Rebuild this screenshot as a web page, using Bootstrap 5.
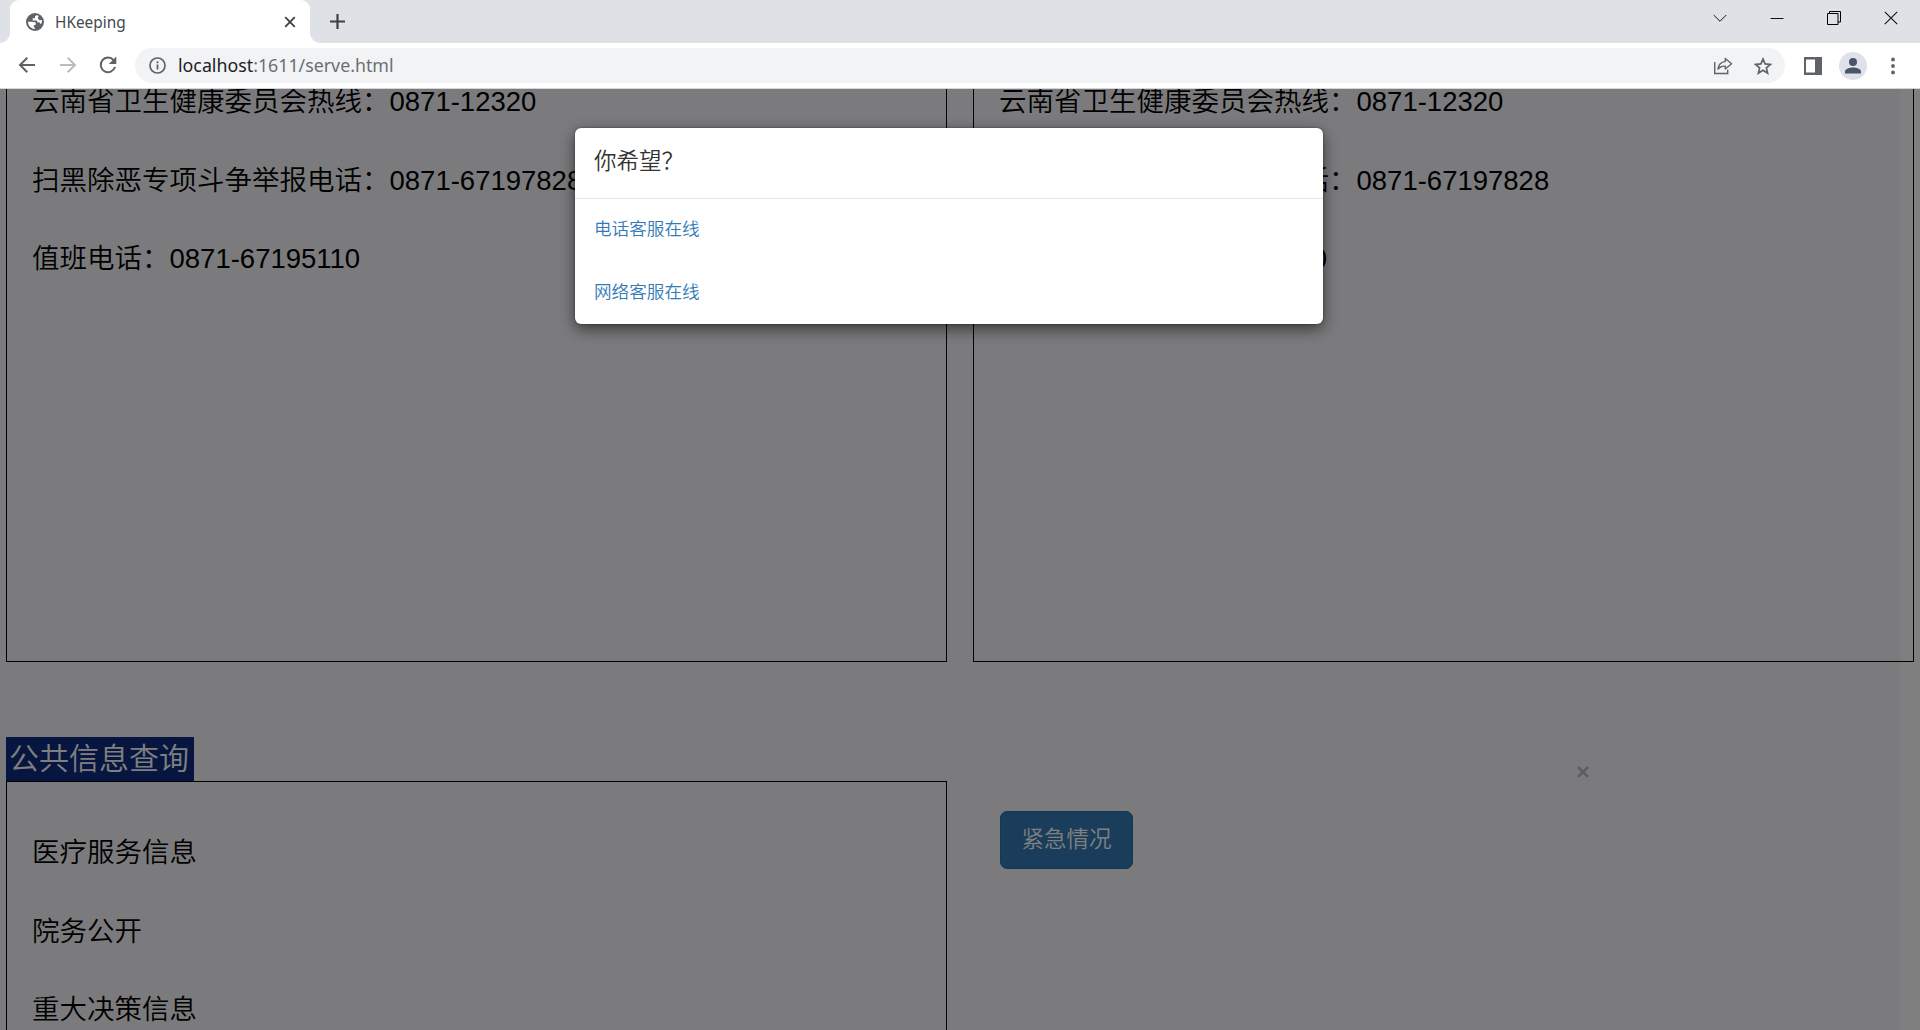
<!DOCTYPE html>
<html lang="zh-CN">
<head>
<meta charset="utf-8">
<title>HKeeping</title>
<link href="https://cdn.jsdelivr.net/npm/bootstrap@5.3.0/dist/css/bootstrap.min.css" rel="stylesheet">
<style>
body{width:1920px;height:1030px;overflow:hidden;background:#fff;font-family:"Liberation Sans","Noto Sans CJK SC",sans-serif;}
svg{display:block;flex:none}
.tabstrip{height:43px;background:#dee1e6;padding-left:10px}
.tab{width:300px;height:43px;background:#fff;border-radius:9px 9px 0 0;padding:0 13px 0 16px;color:#45494d;font:16.4px "Noto Sans",sans-serif;position:relative}
.tab::before,.tab::after{content:"";position:absolute;bottom:0;width:10px;height:10px}
.tab::before{left:-10px;background:radial-gradient(circle at 0 0,transparent 9.5px,#fff 10px)}
.tab::after{right:-10px;background:radial-gradient(circle at 100% 0,transparent 9.5px,#fff 10px)}
.tabname{font-size:15.4px;margin:2px 0 0 11px}
.winbtns{gap:43px;padding:0 22px 7px 0}
.toolbar-row{height:46px;border-bottom:1px solid #d4d5d7;padding:0 25px 0 18px}
.omnibox{height:35px;background:#f1f3f4;border-radius:18px;margin-left:17px;padding:0 13px 0 14px}
.address{font:17.8px "Noto Sans",sans-serif;color:#6b6f73;margin:-1px 0 0 12px;white-space:nowrap}
.address b{font-weight:400;color:#202124}
.avatar{width:28px;height:28px;background:#dee1ea}
.pagearea{height:941px;background:#fff}
.pagebody{width:1900px;height:941px;background:#f7f7fa;padding-left:6px}
.panelrow{width:1908px;gap:26px}
.panel{width:941px;border:1px solid #000;padding-left:25px;color:#000;font-size:27.5px;font-weight:350}
.panel p{margin:0;height:78.6px;line-height:78.6px;white-space:nowrap}
.phones{height:573px;border-top:0}
.phones p:first-child{margin-top:-26px}
.topic{margin-top:75px;width:188px;height:44px;line-height:43px;background:#0e2a82;color:#fff;font-size:30px;padding-left:3px;font-weight:350;white-space:nowrap}
.topics{height:400px;padding-top:32px}
.urgent{--bs-btn-bg:#337ab7;--bs-btn-border-color:#2e6da4;--bs-btn-color:#fff;width:133px;height:58px;font-size:22.5px;border-radius:7px;margin:30px 0 0 27px;padding:0;font-weight:350}
.dismiss{margin:-16px 0 0 443px}
.shade{inset:0;background:#000;opacity:.5}
.dialogbox{left:575px;top:39px;width:748px;height:196px;background:#fff;border:0;border-radius:6px;box-shadow:0 5px 15px rgba(0,0,0,.55),0 0 2px rgba(0,0,0,.5)}
.dialogbox .modal-header{height:71px;padding:0 19px 2px;border-bottom:1px solid #e5e5e5}
.dialogbox .modal-title{font-size:22.5px;font-weight:350;color:#333;line-height:32px}
.dialogbox .modal-body{padding:0 19px;font-size:17.6px;font-weight:350}
.dialogbox a{display:block;height:63px;line-height:60px;color:#337ab7;text-decoration:none}
</style>
</head>
<body>
<header>
  <div class="tabstrip d-flex align-items-center">
    <div class="tab d-flex align-items-center">
      <svg width="18" height="18" viewBox="0 0 18 18"><circle cx="9" cy="9" r="9" fill="#5f6368"/><path d="M10.500 2.200L9 3.200V5.300H6.700V7.500H11.200V9.300H13.200L14.800 11.200C15.700 10 16.200 8.500 16 7L13.500 7.300L12 5.500V4L13 3C12.200 2.500 11.500 2.200 10.500 2.200ZM2 8.700H6.200L9.700 9.500V11.700L7.800 12.300V13.700L9.300 16C5.500 16 2 13 2 8.700Z" fill="#fff"/></svg>
      <span class="tabname">HKeeping</span>
      <svg class="ms-auto" width="14" height="14" viewBox="0 0 14 14" stroke="#3c4043" stroke-width="1.800"><path d="M2.200 2.200l9.600 9.600M11.800 2.200l-9.600 9.600"/></svg>
    </div>
    <svg style="margin-left:19px" width="17" height="17" viewBox="0 0 17 17" stroke="#3c4043" stroke-width="2.200"><path d="M1 8.500h15M8.500 1v15"/></svg>
    <div class="winbtns d-flex align-items-center ms-auto">
      <svg width="14" height="14" viewBox="0 0 14 14" fill="none" stroke="#111"><path d="M.7 4l6.300 6.300L13.300 4"/></svg>
      <svg width="14" height="14" viewBox="0 0 14 14" stroke="#111"><path d="M.5 7.500h13"/></svg>
      <svg width="14" height="14" viewBox="0 0 14 14" fill="none" stroke="#000"><path d="M.5 2.500h10.500v11H.5zM2.500 2.500v-2h11v10.500h-2.500"/></svg>
      <svg width="14" height="14" viewBox="0 0 14 14" stroke="#111" stroke-width="1.100"><path d="M.8.800l12.400 12.400M13.200.800L.8 13.200"/></svg>
    </div>
  </div>
  <div class="toolbar-row d-flex align-items-center">
    <svg style="margin-top:-1px" width="18" height="18" viewBox="0 0 18 18" fill="none" stroke="#5f6368" stroke-width="2"><path d="M17 9H3M9.300 1.700L2 9l7.300 7.300"/></svg>
    <svg style="margin:-1px 0 0 23px" width="18" height="18" viewBox="0 0 18 18" fill="none" stroke="#babcbe" stroke-width="2"><path d="M1 9h14M8.700 1.700L16 9l-7.300 7.300"/></svg>
    <svg style="margin:-1px 0 0 22px" width="19" height="18" viewBox="0 0 19 18"><path d="M14.500 4A7.300 7.300 0 1 0 16 11" fill="none" stroke="#5f6368" stroke-width="2"/><path d="M17.300.500V8H9.800z" fill="#5f6368"/></svg>
    <div class="omnibox d-flex align-items-center flex-grow-1">
      <svg width="17" height="17" viewBox="0 0 17 17"><circle cx="8.500" cy="8.500" r="7.500" fill="none" stroke="#5f6368" stroke-width="1.700"/><path d="M7.600 7.500h1.800v5H7.600zM7.600 4.300h1.800v1.900H7.600z" fill="#5f6368"/></svg>
      <span class="address"><b>localhost</b>:1611/serve.html</span>
      <svg class="ms-auto" width="20" height="18" viewBox="0 0 20 18" fill="none" stroke="#5f6368" stroke-width="1.400"><path d="M1.700 5v11.500h13v-3.800"/><path d="M12.300 1.500L18.600 6.800l-6.300 5.200V9.200C8.800 8.900 6.700 9.900 5 12.200C5.500 8 8 5 12.300 4.400z" stroke-linejoin="round"/></svg>
      <svg style="margin-left:21px" width="18" height="18" viewBox="0 0 18 18" fill="none" stroke="#5f6368" stroke-width="1.700"><path d="M9 2l2.100 4.900 5.300.5-4 3.500 1.200 5.200L9 13.300l-4.600 2.800 1.200-5.200-4-3.500 5.300-.5z"/></svg>
    </div>
    <svg style="margin-left:19px" width="18" height="18" viewBox="0 0 18 18"><path d="M0 0h18v18H0zM2 2.500v13h9v-13z" fill="#5f6368" fill-rule="evenodd"/></svg>
    <div class="avatar rounded-circle d-flex align-items-center justify-content-center" style="margin-left:17px"><svg width="16" height="16" viewBox="0 0 16 16" fill="#4a5468"><circle cx="8" cy="4" r="4"/><path d="M0 15.500v-2C0 10.800 5 9.500 8 9.500s8 1.300 8 4v2z"/></svg></div>
    <svg style="margin-left:24px" width="4" height="18" viewBox="0 0 4 18" fill="#5f6368"><circle cx="2" cy="2.500" r="1.900"/><circle cx="2" cy="9" r="1.900"/><circle cx="2" cy="15.500" r="1.900"/></svg>
  </div>
</header>
<main class="pagearea position-relative overflow-hidden">
  <div class="pagebody">
    <div class="panelrow d-flex">
      <section class="panel phones"><p>云南省卫生健康委员会热线：0871-12320</p><p>扫黑除恶专项斗争举报电话：0871-67197828</p><p>值班电话：0871-67195110</p></section>
      <section class="panel phones"><p>云南省卫生健康委员会热线：0871-12320</p><p>扫黑除恶专项斗争举报电话：0871-67197828</p><p>值班电话：0871-67195110</p></section>
    </div>
    <div class="topic">公共信息查询</div>
    <div class="panelrow d-flex">
      <section class="panel topics"><p>医疗服务信息</p><p>院务公开</p><p>重大决策信息</p></section>
      <div class="d-flex align-items-start">
        <button class="btn urgent" type="button">紧急情况</button>
        <svg class="dismiss" width="14" height="15" viewBox="0 0 14 15" stroke-width="2.600"><path d="M2 3.500l10 10M12 3.500l-10 10" stroke="#fff" opacity=".6"/><path d="M2 2l10 10M12 2L2 12" stroke="#bcbcbe"/></svg>
      </div>
    </div>
  </div>
  <div class="shade position-absolute"></div>
  <div class="modal-content dialogbox position-absolute">
    <div class="modal-header"><h4 class="modal-title">你希望？</h4></div>
    <div class="modal-body"><a href="#">电话客服在线</a><a href="#">网络客服在线</a></div>
  </div>
</main>
<script src="https://cdn.jsdelivr.net/npm/bootstrap@5.3.0/dist/js/bootstrap.bundle.min.js"></script>
</body>
</html>
